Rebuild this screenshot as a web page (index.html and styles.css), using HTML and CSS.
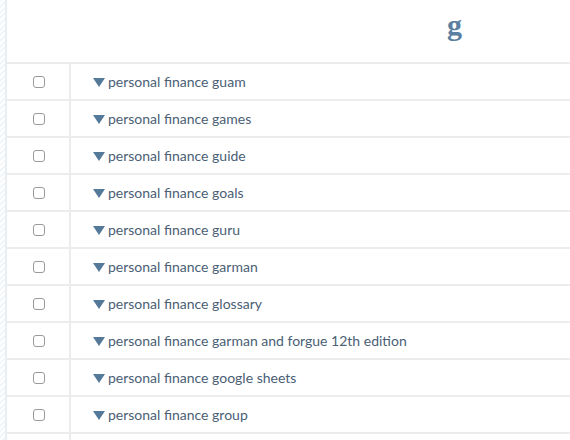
FILE: index.html
```html
<!DOCTYPE html>
<html>
<head>
<meta charset="utf-8">
<link rel="stylesheet" href="styles.css">
</head>
<body>
<div class="page">
  <div class="strip"></div>
  <div class="table">
    <div class="head"><span class="letter">g</span></div>
    <div class="row"><div class="check"><input type="checkbox"></div><div class="kw"><span class="tri"></span>personal finance guam</div></div>
    <div class="row"><div class="check"><input type="checkbox"></div><div class="kw"><span class="tri"></span>personal finance games</div></div>
    <div class="row"><div class="check"><input type="checkbox"></div><div class="kw"><span class="tri"></span>personal finance guide</div></div>
    <div class="row"><div class="check"><input type="checkbox"></div><div class="kw"><span class="tri"></span>personal finance goals</div></div>
    <div class="row"><div class="check"><input type="checkbox"></div><div class="kw"><span class="tri"></span>personal finance guru</div></div>
    <div class="row"><div class="check"><input type="checkbox"></div><div class="kw"><span class="tri"></span>personal finance garman</div></div>
    <div class="row"><div class="check"><input type="checkbox"></div><div class="kw"><span class="tri"></span>personal finance glossary</div></div>
    <div class="row"><div class="check"><input type="checkbox"></div><div class="kw"><span class="tri"></span>personal finance garman and forgue 12th edition</div></div>
    <div class="row"><div class="check"><input type="checkbox"></div><div class="kw"><span class="tri"></span>personal finance google sheets</div></div>
    <div class="row"><div class="check"><input type="checkbox"></div><div class="kw"><span class="tri"></span>personal finance group</div></div>
    <div class="row"><div class="check"></div><div class="kw"></div></div>
  </div>
</div>
</body>
</html>
```
FILE: styles.css
```css
html, body {
  margin: 0;
  padding: 0;
  background: #ffffff;
  overflow: hidden;
}
.page {
  display: flex;
  width: 570px;
  height: 440px;
  overflow: hidden;
  font-family: Lato, "Open Sans", sans-serif;
}
.strip {
  width: 5px;
  flex: none;
  background: repeating-linear-gradient(135deg, #f3f6f9 0 2px, #ffffff 2px 4px);
  border-right: 2px solid #e9eef3;
}
.table {
  flex: 1;
  display: flex;
  flex-direction: column;
}
.head {
  height: 64px;
  flex: none;
  border-bottom: 2px solid #ececec;
  display: flex;
  align-items: center;
  padding-left: 440px;
  box-sizing: border-box;
}
.letter {
  font-family: "Liberation Serif", "DejaVu Serif", serif;
  font-weight: bold;
  font-size: 30px;
  color: #5b7fa0;
  line-height: 1;
  margin-top: -12px;
}
.row {
  display: flex;
  height: 37px;
  flex: none;
  border-bottom: 2px solid #ececec;
  box-sizing: border-box;
}
.check {
  width: 62px;
  flex: none;
  border-right: 2px solid #ececec;
  display: flex;
  align-items: center;
  justify-content: center;
}
.check input {
  appearance: none;
  -webkit-appearance: none;
  margin: 0 0 0 1px;
  width: 12px;
  height: 12px;
  border: 1px solid #9a9a9a;
  border-radius: 3px;
  background: #fff;
}
.kw {
  display: flex;
  align-items: center;
  padding-left: 22px;
  font-size: 14px;
  color: #4a6075;
}
.tri {
  width: 0;
  height: 0;
  border-left: 6px solid transparent;
  border-right: 6px solid transparent;
  border-top: 9px solid #557a99;
  margin-right: 3px;
  margin-top: 1px;
}
```
